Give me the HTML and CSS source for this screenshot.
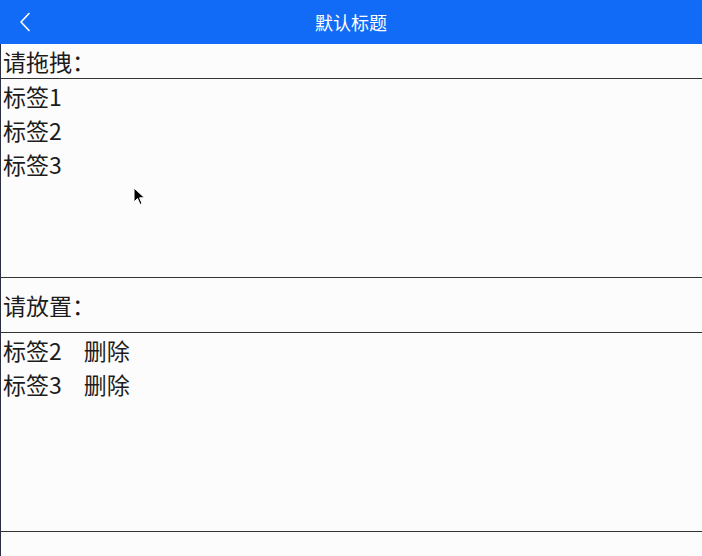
FILE: index.html
```html
<!DOCTYPE html>
<html lang="zh">
<head>
<meta charset="utf-8">
<title>默认标题</title>
<link rel="stylesheet" href="styles.css">
</head>
<body>
<header class="bar">
  <span class="back"><svg width="12" height="20" viewBox="0 0 12 20"><path d="M10 1.5 L2 10 L10 18.5" fill="none" stroke="#fff" stroke-width="1.6" stroke-linecap="round" stroke-linejoin="round"/></svg></span>
  <h1 class="title">默认标题</h1>
</header>
<main class="page">
  <div class="label">请拖拽：</div>
  <div class="box">
    <div class="item">标签1</div>
    <div class="item">标签2</div>
    <div class="item">标签3</div>
  </div>
  <div class="label label-second">请放置：</div>
  <div class="box">
    <div class="item">标签2<span class="del">删除</span></div>
    <div class="item">标签3<span class="del">删除</span></div>
  </div>
</main>
<svg class="cursor" width="14" height="20" viewBox="0 0 14 20"><path d="M1 1 L1 15 L4.5 11.5 L7 17.5 L9 16.6 L6.6 10.8 L11.5 10.8 Z" fill="#000" stroke="#fff" stroke-width="1"/></svg>
</body>
</html>
```
FILE: styles.css
```css
html, body {
  margin: 0;
  padding: 0;
  background: #fcfcfc;
}
body {
  font-family: "Noto Sans CJK SC", "Noto Sans", sans-serif;
  color: #1c1c1c;
  width: 702px;
  height: 556px;
  overflow: hidden;
  position: relative;
}
.bar {
  height: 44px;
  background: #116bf7;
  display: flex;
  align-items: center;
  justify-content: center;
  position: relative;
}
.back {
  position: absolute;
  left: 19px;
  top: 12px;
  display: flex;
}
.title {
  margin: 0;
  font-size: 18px;
  font-weight: normal;
  color: #fff;
  line-height: 44px;
}
.page {
  border-left: 1px solid #2a3040;
  min-height: 512px;
}
.label {
  font-size: 23px;
  line-height: 34px;
  padding-left: 2px;
}
.label-second {
  padding-top: 10px;
  padding-bottom: 10px;
}
.box {
  border-top: 1px solid #333;
  border-bottom: 1px solid #333;
  height: 198px;
  padding-left: 2px;
}
.item {
  font-size: 23px;
  line-height: 34px;
}
.del {
  margin-left: 22px;
}
.cursor {
  position: absolute;
  left: 133px;
  top: 187px;
}
```
